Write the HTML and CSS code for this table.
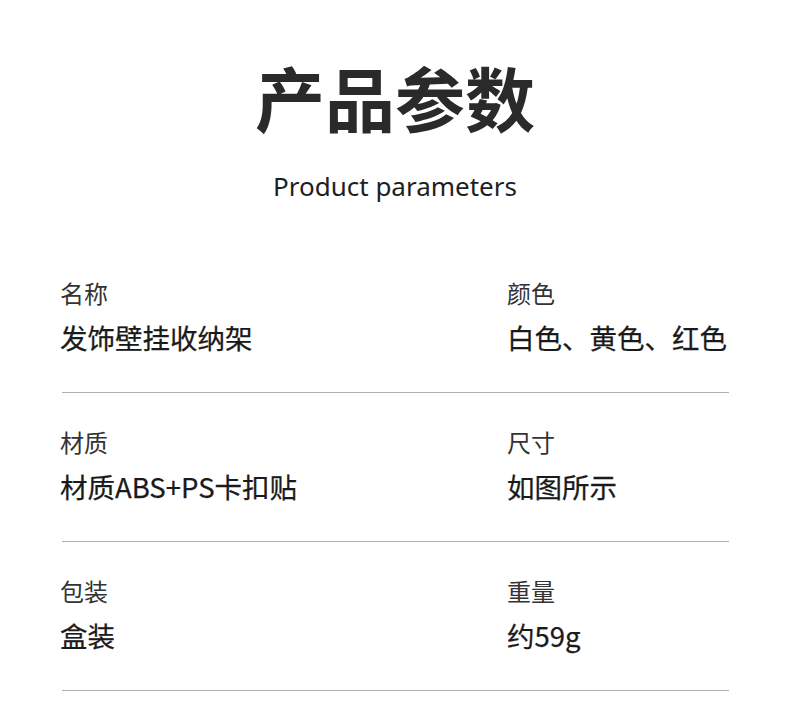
FILE: index.html
```html
<!DOCTYPE html>
<html lang="zh-CN">
<head>
<meta charset="utf-8">
<link rel="stylesheet" href="styles.css">
</head>
<body>
<div class="page">
  <header class="head">
    <h1 class="title">产品参数</h1>
    <p class="subtitle">Product parameters</p>
  </header>
  <section class="table">
    <div class="row">
      <div class="cell"><div class="label">名称</div><div class="value">发饰壁挂收纳架</div></div>
      <div class="cell"><div class="label">颜色</div><div class="value">白色、黄色、红色</div></div>
    </div>
    <div class="row">
      <div class="cell"><div class="label">材质</div><div class="value">材质ABS+PS卡扣贴</div></div>
      <div class="cell"><div class="label">尺寸</div><div class="value">如图所示</div></div>
    </div>
    <div class="row">
      <div class="cell"><div class="label">包装</div><div class="value">盒装</div></div>
      <div class="cell"><div class="label">重量</div><div class="value">约59g</div></div>
    </div>
  </section>
</div>
</body>
</html>
```
FILE: styles.css
```css
html, body {
  margin: 0;
  padding: 0;
  background: #ffffff;
}
body {
  font-family: "Noto Sans CJK SC", "Noto Sans", sans-serif;
  color: #222222;
}
.page {
  width: 790px;
  height: 718px;
  overflow: hidden;
}
.head {
  display: flex;
  flex-direction: column;
  align-items: center;
  padding-top: 52px;
}
.title {
  margin: 0;
  font-size: 70px;
  line-height: 90px;
  font-weight: 700;
  color: #2a2a2a;
}
.subtitle {
  margin: 27px 0 0 0;
  font-family: "Noto Sans", sans-serif;
  font-size: 26px;
  line-height: 34px;
  color: #1e1e1e;
}
.table {
  margin: 41px 61px 0 62px;
}
.row {
  display: grid;
  grid-template-columns: 447px 1fr;
  border-bottom: 1px solid #b0b0b0;
  padding: 34px 0 38px 0;
}
.cell {
  min-width: 0;
  white-space: nowrap;
}
.label {
  font-size: 24px;
  line-height: 30px;
  color: #333333;
  margin-left: -2px;
}
.value {
  margin-top: 12px;
  font-size: 27.5px;
  line-height: 34px;
  font-weight: 400;
  -webkit-text-stroke: 0.25px #1a1a1a;
  color: #1a1a1a;
  margin-left: -2px;
}
```
